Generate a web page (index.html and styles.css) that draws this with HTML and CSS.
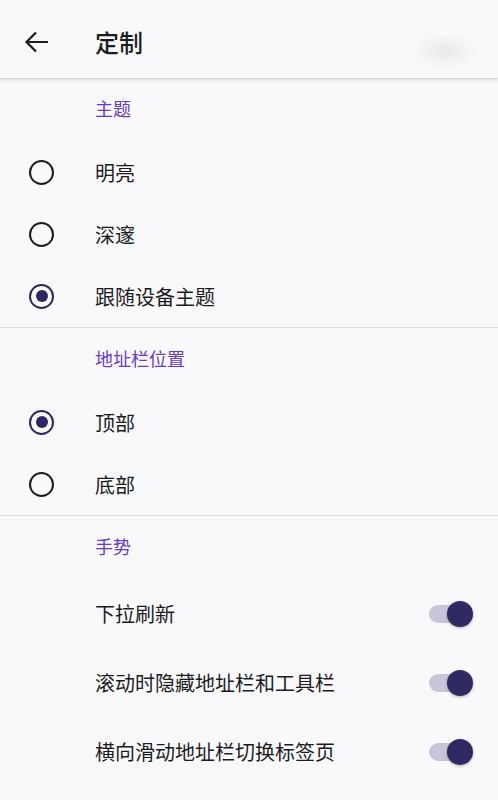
FILE: index.html
```html
<!DOCTYPE html>
<html lang="zh">
<head>
<meta charset="utf-8">
<link rel="stylesheet" href="styles.css">
</head>
<body>
<header class="appbar">
  <svg class="back" width="26" height="24" viewBox="0 0 26 24"><path d="M24 12H2.5M12 2.5L2.5 12L12 21.5" fill="none" stroke="#1c1b1f" stroke-width="2.2"/></svg>
  <h1 class="title">定制</h1>
  <div class="smudge"></div>
</header>
<main>
  <section class="group">
    <div class="group-title">主题</div>
    <div class="row"><span class="radio"></span><span class="label">明亮</span></div>
    <div class="row"><span class="radio"></span><span class="label">深邃</span></div>
    <div class="row"><span class="radio on"></span><span class="label">跟随设备主题</span></div>
  </section>
  <section class="group">
    <div class="group-title">地址栏位置</div>
    <div class="row"><span class="radio on"></span><span class="label">顶部</span></div>
    <div class="row"><span class="radio"></span><span class="label">底部</span></div>
  </section>
  <section class="group last">
    <div class="group-title">手势</div>
    <div class="row sw"><span class="label">下拉刷新</span><span class="switch"></span></div>
    <div class="row sw"><span class="label">滚动时隐藏地址栏和工具栏</span><span class="switch"></span></div>
    <div class="row sw"><span class="label">横向滑动地址栏切换标签页</span><span class="switch"></span></div>
  </section>
</main>
</body>
</html>
```

FILE: styles.css
```css
* { box-sizing: border-box; }
html, body { margin: 0; padding: 0; }
body {
  background: #f9f9fb;
  font-family: "Noto Sans CJK SC", "Noto Sans", sans-serif;
  color: #1c1b1f;
  width: 498px;
  height: 800px;
  overflow: hidden;
}
.appbar {
  height: 78px;
  display: flex;
  align-items: center;
  background: #f9f9fb;
  box-shadow: 0 2px 4px rgba(0,0,0,0.13), 0 1px 1px rgba(0,0,0,0.06);
  position: relative;
  z-index: 2;
}
.back { margin-left: 24px; margin-top: 6px; }
.title {
  margin: 6px 0 0 45px;
  font-size: 24px;
  font-weight: 500;
  line-height: 1;
}
.smudge {
  position: absolute;
  left: 412px;
  top: 32px;
  width: 66px;
  height: 38px;
  border-radius: 50%;
  background: radial-gradient(ellipse at center, rgba(220,220,224,0.55), rgba(249,249,251,0) 70%);
}
.group { border-bottom: 1px solid #dddde1; }
.group.last { border-bottom: none; }
.group-title {
  height: 63px;
  display: flex;
  align-items: center;
  padding-left: 95px;
  padding-bottom: 3px;
  font-size: 18px;
  color: #6a3cc6;
}
.row {
  height: 62px;
  display: flex;
  align-items: center;
}
.row.sw { height: 69px; padding-left: 95px; padding-right: 26px; justify-content: space-between; }
.label { font-size: 20px; }
.radio {
  width: 25px;
  height: 25px;
  border-radius: 50%;
  border: 2.5px solid #1c1b1f;
  margin-left: 29px;
  margin-right: 41px;
  display: flex;
  align-items: center;
  justify-content: center;
}
.radio.on { border-color: #2d2760; }
.radio.on::after {
  content: "";
  width: 12px;
  height: 12px;
  border-radius: 50%;
  background: #2d2760;
}
.switch {
  position: relative;
  width: 43px;
  height: 18px;
  border-radius: 9px;
  background: #c7c5d9;
}
.switch::after {
  content: "";
  position: absolute;
  right: -1px;
  top: -4px;
  width: 26px;
  height: 26px;
  border-radius: 50%;
  background: #2f2a62;
  box-shadow: 0 1px 3px rgba(0,0,0,0.3);
}
```
